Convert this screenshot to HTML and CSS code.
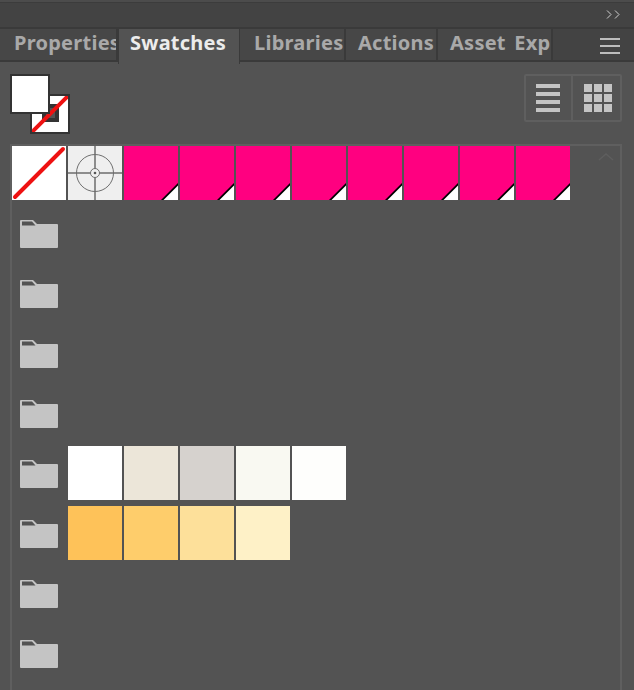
FILE: index.html
```html
<!DOCTYPE html>
<html lang="en">
<head>
    <meta charset="UTF-8">
    <title>Swatches</title>
    <link rel="stylesheet" href="styles.css">
</head>
<body>
    <div class="top-bar">
        <svg class="collapse-icon" width="14" height="9" viewBox="0 0 14 9">
            <path d="M1 .5 5 4.500 1 8.500M9 .5 13 4.500 9 8.500" fill="none" stroke="#cfcfcf" stroke-width="1"/>
        </svg>
    </div>
    <div class="tab-bar">
        <div class="tab tab-properties"><span>Properties</span></div>
        <div class="tab tab-active"><span>Swatches</span></div>
        <div class="tab tab-libraries"><span>Libraries</span></div>
        <div class="tab tab-actions"><span>Actions</span></div>
        <div class="tab tab-asset"><span>Asset Exp</span></div>
        <div class="tab-rest">
            <div class="menu-btn"><i></i><i></i><i></i></div>
        </div>
    </div>

    <div class="panel">
        <div class="toolbar">
            <div class="fill-stroke">
                <div class="stroke-box">
                    <div class="stroke-hole"></div>
                    <svg class="stroke-slash" width="36" height="36" viewBox="0 0 36 36">
                        <line x1="0" y1="36" x2="36" y2="0" stroke="#ee1111" stroke-width="4"/>
                    </svg>
                </div>
                <div class="fill-box"></div>
            </div>
            <div class="view-btns">
                <div class="view-btn view-list"><i></i><i></i><i></i><i></i></div>
                <div class="view-btn view-grid">
                    <i></i><i></i><i></i><i></i><i></i><i></i><i></i><i></i><i></i>
                </div>
            </div>
        </div>

        <div class="swatch-list">
            <svg class="scroll-up" width="16" height="8" viewBox="0 0 16 8">
                <path d="M1 7 8 1 15 7" fill="none" stroke="#5e5e5e" stroke-width="1.500"/>
            </svg>
            <div class="row row-first">
                <div class="swatch swatch-none">
                    <svg width="54" height="54" viewBox="0 0 54 54">
                        <line x1="3" y1="51" x2="51" y2="3" stroke="#ee1111" stroke-width="4" stroke-linecap="round"/>
                    </svg>
                </div>
                <div class="swatch swatch-reg">
                    <svg width="54" height="54" viewBox="0 0 54 54">
                        <circle cx="27" cy="27" r="18.500" fill="none" stroke="#6e6e6e" stroke-width="1"/>
                        <circle cx="27" cy="27" r="4.500" fill="none" stroke="#6e6e6e" stroke-width="1"/>
                        <circle cx="27" cy="27" r="1.300" fill="#555"/>
                        <path d="M27 0V22.500M27 31.500V54M0 27H22.500M31.500 27H54" stroke="#6e6e6e" stroke-width="1.500" fill="none"/>
                    </svg>
                </div>
                <div class="swatch swatch-pink"><svg width="54" height="54" viewBox="0 0 54 54"><use href="#corner"/></svg></div>
                <div class="swatch swatch-pink"><svg width="54" height="54" viewBox="0 0 54 54"><use href="#corner"/></svg></div>
                <div class="swatch swatch-pink"><svg width="54" height="54" viewBox="0 0 54 54"><use href="#corner"/></svg></div>
                <div class="swatch swatch-pink"><svg width="54" height="54" viewBox="0 0 54 54"><use href="#corner"/></svg></div>
                <div class="swatch swatch-pink"><svg width="54" height="54" viewBox="0 0 54 54"><use href="#corner"/></svg></div>
                <div class="swatch swatch-pink"><svg width="54" height="54" viewBox="0 0 54 54"><use href="#corner"/></svg></div>
                <div class="swatch swatch-pink"><svg width="54" height="54" viewBox="0 0 54 54"><use href="#corner"/></svg></div>
                <div class="swatch swatch-pink"><svg width="54" height="54" viewBox="0 0 54 54"><use href="#corner"/></svg></div>
            </div>
            <div class="row"><svg class="folder"><use href="#folder"/></svg></div>
            <div class="row"><svg class="folder"><use href="#folder"/></svg></div>
            <div class="row"><svg class="folder"><use href="#folder"/></svg></div>
            <div class="row"><svg class="folder"><use href="#folder"/></svg></div>
            <div class="row">
                <svg class="folder"><use href="#folder"/></svg>
                <div class="swatch c-white"></div>
                <div class="swatch c-linen"></div>
                <div class="swatch c-stone"></div>
                <div class="swatch c-ivory"></div>
                <div class="swatch c-snow"></div>
            </div>
            <div class="row">
                <svg class="folder"><use href="#folder"/></svg>
                <div class="swatch c-amber1"></div>
                <div class="swatch c-amber2"></div>
                <div class="swatch c-amber3"></div>
                <div class="swatch c-amber4"></div>
            </div>
            <div class="row"><svg class="folder"><use href="#folder"/></svg></div>
            <div class="row"><svg class="folder"><use href="#folder"/></svg></div>
        </div>
    </div>

    <!-- shared icon shapes -->
    <svg class="defs" width="0" height="0">
        <defs>
            <g id="corner">
                <path d="M54 37V54H37Z" fill="#000"/>
                <path d="M54 39.500V54H39.500Z" fill="#fff"/>
            </g>
            <g id="folder">
                <path d="M0 1Q0 0 1 0H13L17 4H37Q38 4 38 5V27Q38 28 37 28H1Q0 28 0 27Z" fill="#c4c4c4"/>
                <path d="M2 1.500H12L15.500 5.500H2Z" fill="#535353"/>
            </g>
        </defs>
    </svg>
</body>
</html>
```

FILE: styles.css
```css
html, body {
    margin: 0;
    height: 690px;
    overflow: hidden;
}
body {
    background-color: #535353;
    font-family: "Noto Sans", "Open Sans", sans-serif;
}
.top-bar {
    box-sizing: border-box;
    height: 27px;
    background-color: #434343;
    border-top: 2px solid #4c4c4c;
    box-shadow: inset 0 1px 0 #3c3c3c;
    display: flex;
    justify-content: flex-end;
    align-items: center;
    padding: 0 14px 0 0;
}
.tab-bar {
    box-sizing: border-box;
    height: 35px;
    display: flex;
    background-color: #434343;
    border-top: 2px solid #3a3a3a;
    border-bottom: 2px solid #3a3a3a;
    position: relative;
}
.tab {
    overflow: hidden;
    white-space: nowrap;
    box-sizing: border-box;
    font-size: 20px;
    font-weight: 700;
    letter-spacing: .25px;
    color: #a9a9a9;
    line-height: 27px;
    background-color: #474747;
    border-right: 2px solid #3a3a3a;
}
.tab-properties {
    width: 118px;
    padding-left: 14px;
}
.tab-active {
    width: 122px;
    height: 35px;
    padding-left: 11px;
    color: #ececec;
    background-color: #535353;
    border-left: 1px solid #3a3a3a;
    border-right: 1px solid #3a3a3a;
    position: relative;
    z-index: 1;
}
.tab-libraries {
    width: 106px;
    padding-left: 14px;
}
.tab-actions {
    width: 92px;
    padding-left: 12px;
}
.tab-asset {
    width: 115px;
    padding-left: 12px;
    word-spacing: 3px;
}
.tab-rest {
    flex: 1;
    display: flex;
    justify-content: flex-end;
    align-items: center;
    padding-right: 14px;
}
.menu-btn {
    display: flex;
    flex-direction: column;
    gap: 5px;
    width: 20px;
    margin-top: 2px;
}
.menu-btn i {
    display: block;
    height: 2px;
    background-color: #bdbdbd;
}
.panel {
    padding: 12px 10px 0;
    height: 628px;
    box-sizing: border-box;
}
.toolbar {
    display: flex;
    justify-content: space-between;
    align-items: flex-start;
    height: 70px;
}
.fill-stroke {
    position: relative;
    width: 60px;
    height: 60px;
}
.fill-box,
.stroke-box {
    position: absolute;
    box-sizing: border-box;
    width: 40px;
    height: 40px;
    background-color: #fff;
    border: 2px solid #333;
}
.fill-box {
    left: 0;
    top: 0;
}
.stroke-box {
    left: 20px;
    top: 20px;
}
.stroke-hole {
    position: absolute;
    left: 10px;
    top: 8px;
    box-sizing: border-box;
    width: 17px;
    height: 18px;
    background-color: #535353;
    border: 4px solid #333;
}
.stroke-slash {
    position: absolute;
    left: 0;
    top: 0;
}
.view-btns {
    display: flex;
    box-sizing: border-box;
    width: 98px;
    height: 48px;
    margin: 0 2px 0 0;
    border: 2px solid #5f5f5f;
    border-radius: 2px;
}
.view-btn {
    box-sizing: border-box;
    flex: 1;
    display: flex;
    justify-content: center;
    align-items: center;
}
.view-list {
    flex: 0 0 47px;
    flex-direction: column;
    gap: 4px;
    padding-right: 1px;
    border-right: 2px solid #5f5f5f;
}
.view-list i {
    display: block;
    width: 24px;
    height: 4px;
    background-color: #c4c4c4;
}
.view-grid {
    display: grid;
    grid-template-columns: repeat(3, 8px);
    grid-auto-rows: 8px;
    gap: 2px;
    align-items: stretch;
    align-content: center;
    padding-left: 3px;
}
.view-grid i {
    display: block;
    background-color: #c4c4c4;
}
.swatch-list {
    position: relative;
    box-sizing: border-box;
    width: 612px;
    height: 560px;
    border-top: 2px solid #5f5f5f;
    border-left: 2px solid #5f5f5f;
    border-right: 2px solid #5f5f5f;
}
.scroll-up {
    position: absolute;
    right: 6px;
    top: 7px;
}
.row {
    display: flex;
    gap: 2px;
    height: 54px;
    margin-bottom: 6px;
    padding-left: 8px;
}
.row-first {
    padding-left: 0;
}
.folder {
    width: 38px;
    height: 28px;
    margin: 14px 8px 0 0;
}
.swatch {
    width: 54px;
    height: 54px;
    flex: none;
}
.swatch svg {
    display: block;
}
.swatch-none {
    background-color: #fff;
}
.swatch-reg {
    background-color: #efefef;
}
.swatch-pink {
    background-color: #ff0080;
}
.c-white { background-color: #ffffff; }
.c-linen { background-color: #ece6d9; }
.c-stone { background-color: #d6d2ce; }
.c-ivory { background-color: #f9f9f2; }
.c-snow { background-color: #fefefc; }
.c-amber1 { background-color: #fec259; }
.c-amber2 { background-color: #fecd6b; }
.c-amber3 { background-color: #fde09a; }
.c-amber4 { background-color: #fef1c7; }
.defs {
    position: absolute;
}
```
